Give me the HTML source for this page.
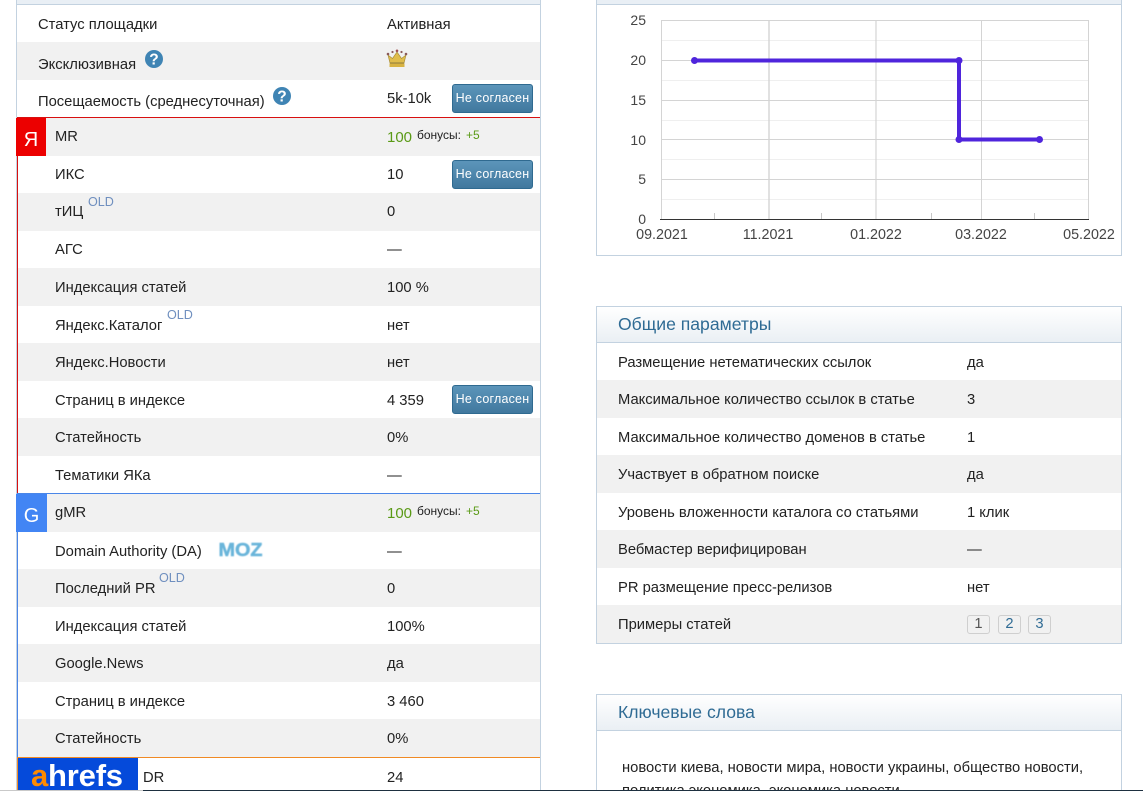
<!DOCTYPE html>
<html lang="ru"><head><meta charset="utf-8"><title>Параметры площадки</title>
<style>
html,body{margin:0;padding:0;background:#fff}
#p{position:relative;width:1143px;height:791px;overflow:hidden;background:#fff;font:14.75px/20px "Liberation Sans",Arial,sans-serif;color:#222}
#p div,#p span.t,#p svg{position:absolute}
.t{white-space:nowrap;margin-top:1px}
.t.old,.t.h,.t.s{margin-top:0}
.g{background:#f1f1f1;height:38px}
.btn{left:452px;width:79px;height:27px;border:1px solid #2f6a90;border-radius:3px;background:linear-gradient(#5c95ba,#41789e);color:#fff;font-size:12.5px;line-height:26px;text-align:center;letter-spacing:.2px}
.old{color:#6f8fbf;font-size:12.600px}
.grn{color:#5a9a16}
.h{color:#2f6b94;font-size:17.600px}
.pg{border:1px solid #cfcfcf;border-radius:3px;width:21px;height:17px;top:615px;line-height:17px;text-align:center;color:#2f6b94;font-size:14.700px}
</style></head><body><div id="p">
<!-- left rows -->
<div style="left:17px;top:0;width:523px;height:4px;background:#e9eff5"></div>
<div style="left:17px;top:4px;width:523px;height:1px;background:#c3d2e0"></div>
<div class="g" style="left:17px;top:42px;width:523px"></div>
<div class="g" style="left:17px;top:118px;width:523px"></div>
<div class="g" style="left:17px;top:193px;width:523px"></div>
<div class="g" style="left:17px;top:268px;width:523px"></div>
<div class="g" style="left:17px;top:343px;width:523px"></div>
<div class="g" style="left:17px;top:418px;width:523px"></div>
<div class="g" style="left:17px;top:494px;width:523px"></div>
<div class="g" style="left:17px;top:569px;width:523px"></div>
<div class="g" style="left:17px;top:644px;width:523px"></div>
<div class="g" style="left:17px;top:719px;width:523px"></div>
<div style="left:16px;top:0;width:1px;height:791px;background:#c3d2e0"></div>
<div style="left:17px;top:118px;width:1px;height:376px;background:#d81010"></div>
<div style="left:17px;top:494px;width:1px;height:264px;background:#4a86e8"></div>
<div style="left:17px;top:758px;width:1px;height:33px;background:#f08a24"></div>
<div style="left:540px;top:0;width:1px;height:791px;background:#c3d2e0"></div>
<div style="left:17px;top:117px;width:523px;height:1px;background:#d81010"></div>
<div style="left:17px;top:493px;width:523px;height:1px;background:#4a86e8"></div>
<div style="left:17px;top:757px;width:523px;height:1px;background:#f08a24"></div>

<span class="t" style="left:38px;top:14px">Статус площадки</span><span class="t" style="left:387px;top:14px">Активная</span>
<span class="t" style="left:38px;top:54px">Эксклюзивная</span>
<span class="t" style="left:38px;top:91px">Посещаемость (среднесуточная)</span><span class="t" style="left:387px;top:88px">5k-10k</span>
<svg style="left:145px;top:50px" width="18" height="18" viewBox="0 0 18 18"><circle cx="9" cy="9" r="9" fill="#3f84b4"/><text x="9" y="14.500" font-family="Liberation Sans" font-size="15.500" font-weight="bold" fill="#fff" text-anchor="middle">?</text></svg>
<svg style="left:273px;top:87px" width="18" height="18" viewBox="0 0 18 18"><circle cx="9" cy="9" r="9" fill="#3f84b4"/><text x="9" y="14.500" font-family="Liberation Sans" font-size="15.500" font-weight="bold" fill="#fff" text-anchor="middle">?</text></svg>
<svg style="left:386px;top:49px" width="22" height="20" viewBox="0 0 22 20"><path d="M2 6l2 8h14l2-8-4.500 3.500L11 3 6.500 9.500z" fill="#e0bd4c" stroke="#a98e3a" stroke-width=".7"/><rect x="3.500" y="14.500" width="15" height="3.500" fill="#d8b343"/><rect x="4" y="13.500" width="14" height="1" fill="#8d7a3c"/><circle cx="2" cy="5" r="1.300" fill="#8a5a5a"/><circle cx="6.500" cy="3" r="1.100" fill="#8a5a5a"/><circle cx="11" cy="1.800" r="1.300" fill="#a05050"/><circle cx="15.500" cy="3" r="1.100" fill="#8a5a5a"/><circle cx="20" cy="5" r="1.300" fill="#8a5a5a"/></svg>
<div class="btn" style="top:84px">Не согласен</div>

<div style="left:16px;top:118px;width:30px;height:38px;background:#ec0000;color:#fff;font-size:20px;line-height:44px;text-align:center">Я</div>
<span class="t" style="left:55px;top:126px">MR</span>
<span class="t grn s" style="left:387px;top:128px;font-size:15px">100</span><span class="t s" style="left:417px;top:125px;font-size:12px">бонусы:</span><span class="t grn s" style="left:466px;top:125px;font-size:12px">+5</span>
<span class="t" style="left:55px;top:164px">ИКС</span><span class="t" style="left:387px;top:164px">10</span>
<div class="btn" style="top:160px">Не согласен</div>
<span class="t" style="left:55px;top:201px">тИЦ</span><span class="t old" style="left:88px;top:192px">OLD</span><span class="t" style="left:387px;top:201px">0</span>
<span class="t" style="left:55px;top:239px">АГС</span><span class="t" style="left:387px;top:239px">—</span>
<span class="t" style="left:55px;top:277px">Индексация статей</span><span class="t" style="left:387px;top:277px">100 %</span>
<span class="t" style="left:55px;top:315px">Яндекс.Каталог</span><span class="t old" style="left:167px;top:305px">OLD</span><span class="t" style="left:387px;top:315px">нет</span>
<span class="t" style="left:55px;top:352px">Яндекс.Новости</span><span class="t" style="left:387px;top:352px">нет</span>
<span class="t" style="left:55px;top:390px">Страниц в индексе</span><span class="t" style="left:387px;top:390px">4 359</span>
<div class="btn" style="top:385px">Не согласен</div>
<span class="t" style="left:55px;top:427px">Статейность</span><span class="t" style="left:387px;top:427px">0%</span>
<span class="t" style="left:55px;top:465px">Тематики ЯКа</span><span class="t" style="left:387px;top:465px">—</span>

<div style="left:16px;top:494px;width:31px;height:38px;background:#4285f4;color:#fff;font-size:20px;line-height:44px;text-align:center">G</div>
<span class="t" style="left:55px;top:502px">gMR</span>
<span class="t grn s" style="left:387px;top:504px;font-size:15px">100</span><span class="t s" style="left:417px;top:501px;font-size:12px">бонусы:</span><span class="t grn s" style="left:466px;top:501px;font-size:12px">+5</span>
<span class="t" style="left:55px;top:541px">Domain Authority (DA)</span><span class="t" style="left:387px;top:541px">—</span>
<svg style="left:218px;top:541px;filter:blur(.4px)" width="45" height="17" viewBox="0 0 45 17"><text x="0.500" y="15" font-family="Liberation Sans" font-weight="bold" font-size="18" fill="#6ab5da" stroke="#6ab5da" stroke-width=".5" textLength="44" lengthAdjust="spacingAndGlyphs">MOZ</text></svg>
<span class="t" style="left:55px;top:578px">Последний PR</span><span class="t old" style="left:159px;top:568px">OLD</span><span class="t" style="left:387px;top:578px">0</span>
<span class="t" style="left:55px;top:616px">Индексация статей</span><span class="t" style="left:387px;top:616px">100%</span>
<span class="t" style="left:55px;top:653px">Google.News</span><span class="t" style="left:387px;top:653px">да</span>
<span class="t" style="left:55px;top:691px">Страниц в индексе</span><span class="t" style="left:387px;top:691px">3 460</span>
<span class="t" style="left:55px;top:728px">Статейность</span><span class="t" style="left:387px;top:728px">0%</span>
<div style="left:18px;top:758px;width:120px;height:32px;background:#054ada;overflow:hidden"><span class="t s" style="left:13px;top:1px;font-size:31px;line-height:34px;font-weight:bold;color:#fff;letter-spacing:-.2px"><span style="color:#ff8a00">a</span>hrefs</span></div>
<span class="t" style="left:143px;top:767px">DR</span><span class="t" style="left:387px;top:767px">24</span>

<!-- chart panel -->
<div style="left:596px;top:0;width:524px;height:255px;border:1px solid #c3d2e0;border-top:0"></div>
<div style="left:597px;top:0;width:524px;height:4px;background:#e9eff5"></div>
<div style="left:597px;top:4px;width:524px;height:1px;background:#c3d2e0"></div>
<svg style="left:597px;top:5px" width="524" height="250" viewBox="597 5 524 250" font-family="Liberation Sans" font-size="14.300" fill="#444">
<g stroke="#efefef" stroke-width="1"><path d="M661 40.500H1088M661 80.500H1088M661 120.500H1088M661 159.500H1088M661 199.500H1088"/></g>
<g stroke="#d4d4d4" stroke-width="1"><path d="M661 20.500H1088M661 60.500H1088M661 100.500H1088M661 139.500H1088M661 179.500H1088"/><path d="M661.500 20V219M1088.500 20V219"/></g>
<g stroke="#d4d4d4"><path d="M769 20V219" stroke-width="1.400"/><path d="M876 20V219" stroke-width="1.200"/><path d="M981.500 20V219" stroke-width="1"/></g>
<g stroke="#c8c8c8" stroke-width="1"><path d="M714.500 213V219M821.500 213V219M931.500 213V219M1034.500 213V219"/></g>
<path d="M660 219.500H1089" stroke="#333" stroke-width="1"/>
<path d="M694.500 60.500H959V139.500H1039.500" fill="none" stroke="#4f25dc" stroke-width="4"/>
<g fill="#4f25dc"><circle cx="694.500" cy="60.500" r="3.500"/><circle cx="959" cy="60.500" r="3.500"/><circle cx="959" cy="139.500" r="3.500"/><circle cx="1039.500" cy="139.500" r="3.500"/></g>
<g text-anchor="end" font-size="14"><text x="646" y="25">25</text><text x="646" y="65">20</text><text x="646" y="105">15</text><text x="646" y="145">10</text><text x="646" y="184">5</text><text x="646" y="224">0</text></g>
<g text-anchor="middle"><text x="662" y="239">09.2021</text><text x="768" y="239">11.2021</text><text x="876" y="239">01.2022</text><text x="981" y="239">03.2022</text><text x="1089" y="239">05.2022</text></g>
</svg>

<!-- params panel -->
<div style="left:596px;top:306px;width:524px;height:336px;border:1px solid #c3d2e0"></div>
<div style="left:597px;top:307px;width:524px;height:35px;background:linear-gradient(#fff,#eaeff4);border-bottom:1px solid #c3d2e0"></div>
<span class="t h" style="left:618px;top:314px">Общие параметры</span>
<div class="g" style="left:597px;top:380px;width:524px"></div>
<div class="g" style="left:597px;top:455px;width:524px"></div>
<div class="g" style="left:597px;top:530px;width:524px"></div>
<div class="g" style="left:597px;top:605px;width:524px"></div>
<span class="t" style="left:618px;top:352px">Размещение нетематических ссылок</span><span class="t" style="left:967px;top:352px">да</span>
<span class="t" style="left:618px;top:389px">Максимальное количество ссылок в статье</span><span class="t" style="left:967px;top:389px">3</span>
<span class="t" style="left:618px;top:427px">Максимальное количество доменов в статье</span><span class="t" style="left:967px;top:427px">1</span>
<span class="t" style="left:618px;top:464px">Участвует в обратном поиске</span><span class="t" style="left:967px;top:464px">да</span>
<span class="t" style="left:618px;top:502px">Уровень вложенности каталога со статьями</span><span class="t" style="left:967px;top:502px">1 клик</span>
<span class="t" style="left:618px;top:539px">Вебмастер верифицирован</span><span class="t" style="left:967px;top:539px">—</span>
<span class="t" style="left:618px;top:577px">PR размещение пресс-релизов</span><span class="t" style="left:967px;top:577px">нет</span>
<span class="t" style="left:618px;top:614px">Примеры статей</span>
<div class="pg" style="left:967px;color:#555">1</div><div class="pg" style="left:998px">2</div><div class="pg" style="left:1028px">3</div>

<!-- keywords panel -->
<div style="left:596px;top:694px;width:524px;height:110px;border:1px solid #c3d2e0"></div>
<div style="left:597px;top:695px;width:524px;height:35px;background:linear-gradient(#fff,#eaeff4);border-bottom:1px solid #c3d2e0"></div>
<span class="t h" style="left:618px;top:702px">Ключевые слова</span>
<span class="t" style="left:622px;top:757px">новости киева, новости мира, новости украины, общество новости,</span>
<span class="t" style="left:622px;top:780px">политика экономика, экономика новости</span>

<div style="left:0;top:790px;width:143px;height:1px;background:#c9c9c9"></div>
<div style="left:143px;top:790px;width:1000px;height:1px;background:#1e3040"></div>
</div></body></html>
